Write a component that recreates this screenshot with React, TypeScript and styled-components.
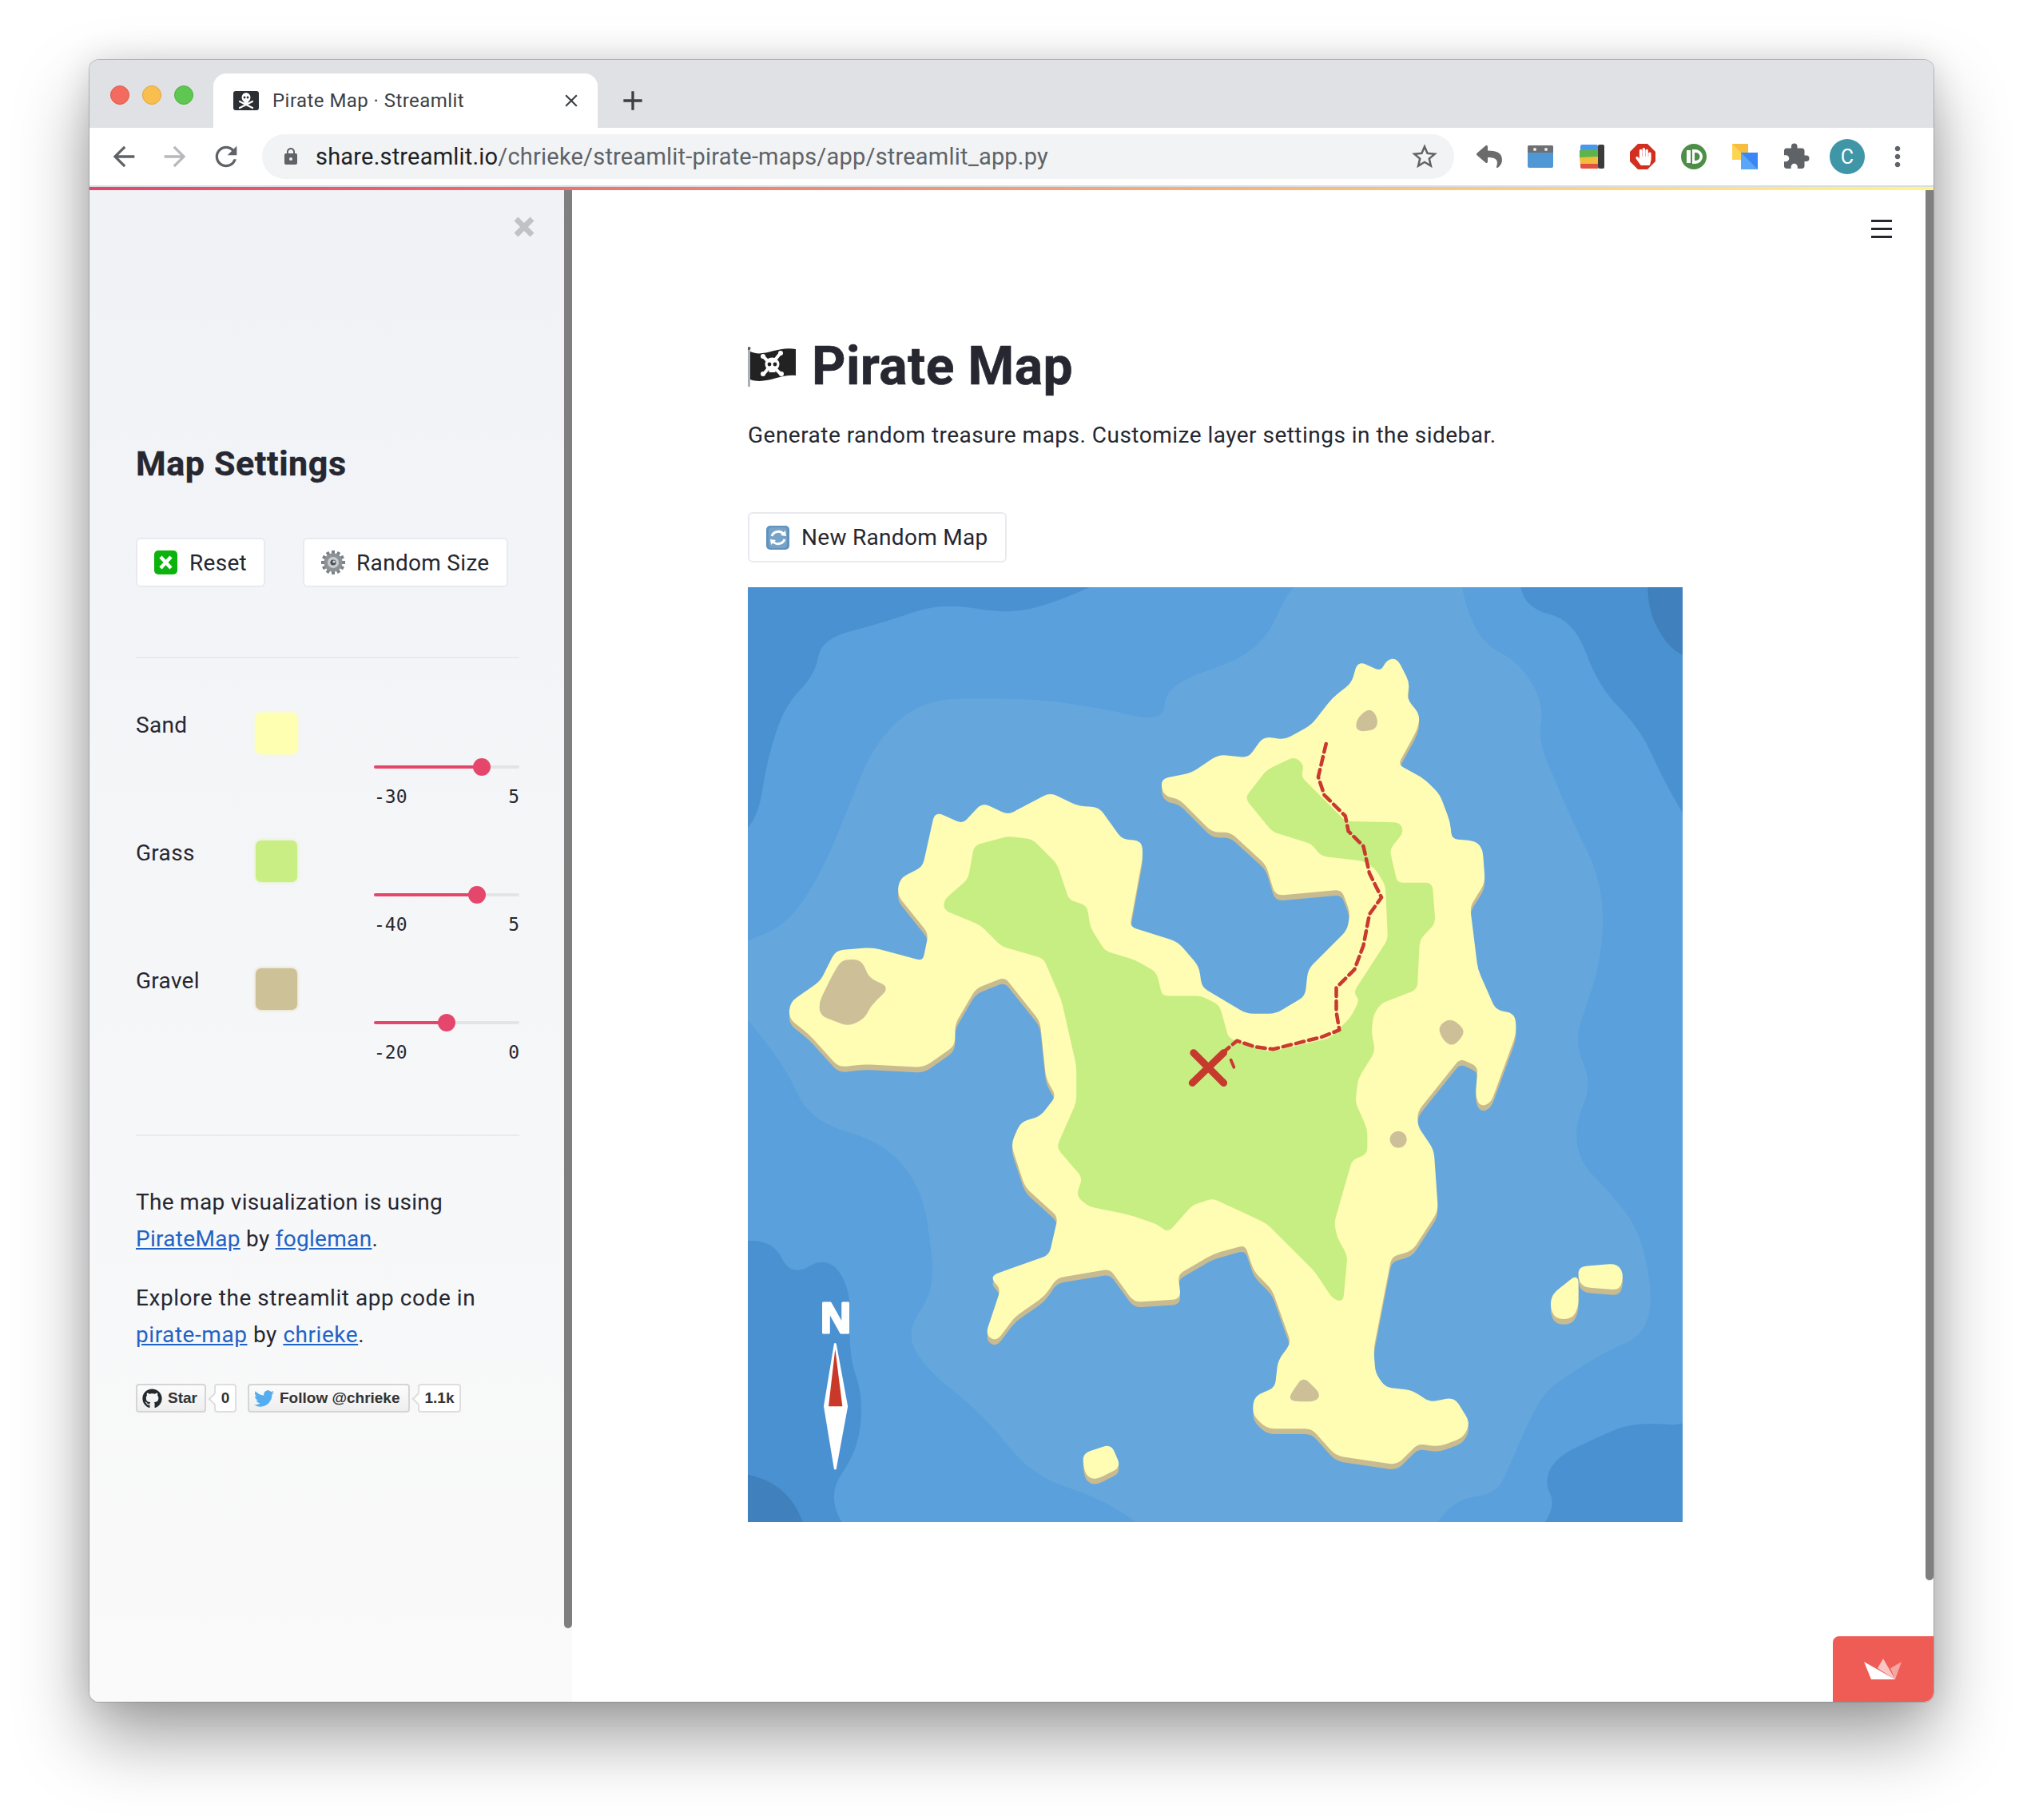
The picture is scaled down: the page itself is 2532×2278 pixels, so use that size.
import styled, { createGlobalStyle } from "styled-components";
import { FaGithub, FaHandPaper, FaReply, FaTwitter } from "react-icons/fa";
import {
  MdAdd,
  MdArrowBack,
  MdArrowForward,
  MdClose,
  MdExtension,
  MdLock,
  MdMoreVert,
  MdRefresh,
  MdStarBorder,
} from "react-icons/md";

const SANS = `Roboto, "Liberation Sans", sans-serif`;

const toPoints = (list: number[][]) => list.map((p) => p.join(",")).join(" ");

// closed path with every corner rounded off by up to r units
const roundedPath = (list: number[][], r: number) => {
  const n = list.length;
  const parts = list.map((cur, i) => {
    const prev = list[(i + n - 1) % n];
    const next = list[(i + 1) % n];
    const d1 = Math.hypot(prev[0] - cur[0], prev[1] - cur[1]);
    const d2 = Math.hypot(next[0] - cur[0], next[1] - cur[1]);
    const t1 = Math.min(r, d1 / 2) / d1;
    const t2 = Math.min(r, d2 / 2) / d2;
    const ax = cur[0] + (prev[0] - cur[0]) * t1;
    const ay = cur[1] + (prev[1] - cur[1]) * t1;
    const bx = cur[0] + (next[0] - cur[0]) * t2;
    const by = cur[1] + (next[1] - cur[1]) * t2;
    return `${i === 0 ? "M" : "L"}${ax} ${ay} Q${cur[0]} ${cur[1]} ${bx} ${by}`;
  });
  return `${parts.join(" ")} Z`;
};

// map shapes, traced in a 1552 unit box
const WATER_MID = [
  [-20, 430], [25, 390], [40, 290], [70, 200], [120, 150], [130, 90], [230, 65], [330, 30], [440, 50], [520, 30], [630, -20],
  [1285, -20], [1300, 40], [1380, 60], [1420, 170], [1490, 240], [1530, 330], [1590, 430], [1590, 1400], [1480, 1390],
  [1410, 1420], [1350, 1450], [1330, 1490], [1350, 1530], [1310, 1590], [180, 1590], [140, 1510], [190, 1440],
  [200, 1350], [175, 1280], [180, 1170], [140, 1115], [80, 1150], [50, 1090], [-20, 1090],
];
const WATER_LIGHT = [
  [920, -20], [1190, -20], [1200, 40], [1230, 100], [1290, 130], [1330, 200], [1320, 260], [1350, 330], [1380, 400],
  [1420, 480], [1430, 560], [1420, 640], [1400, 700], [1380, 760], [1410, 830], [1380, 900], [1390, 960], [1430, 1000],
  [1480, 1060], [1500, 1120], [1510, 1200], [1490, 1250], [1440, 1270], [1390, 1300], [1330, 1340], [1300, 1400],
  [1270, 1470], [1250, 1510], [1180, 1520], [1130, 1590], [700, 1590], [600, 1520], [480, 1480], [400, 1380],
  [300, 1300], [270, 1240], [320, 1170], [300, 1010], [240, 930], [110, 890], [70, 800], [-20, 690], [-20, 600], [70, 570],
  [130, 480], [220, 260], [300, 190], [480, 190], [590, 205], [700, 230], [700, 170], [860, 110],
];
const DEEP_CORNERS = [
  [[1500, -20], [1505, 50], [1540, 110], [1590, 130], [1590, -20]],
  [[-20, 1470], [50, 1490], [90, 1530], [110, 1590], [-20, 1590]],
];
const SAND = [
  [1022, 130], [1060, 147], [1070, 127], [1085, 125], [1105, 165], [1100, 190], [1122, 218], [1118, 240], [1085, 300],
  [1130, 325], [1155, 350], [1172, 395], [1175, 425], [1215, 428], [1226, 440], [1230, 495], [1205, 535], [1218, 640],
  [1248, 708], [1280, 715], [1282, 745], [1240, 860], [1225, 865], [1218, 850], [1222, 800], [1190, 785], [1118, 875],
  [1118, 900], [1145, 940], [1152, 1040], [1110, 1105], [1075, 1115], [1045, 1270], [1048, 1310], [1065, 1335],
  [1110, 1340], [1140, 1360], [1180, 1352], [1205, 1392], [1195, 1415], [1155, 1430], [1120, 1425], [1085, 1460],
  [985, 1445], [945, 1400], [870, 1400], [848, 1378], [850, 1350], [885, 1335], [890, 1290], [912, 1260], [880, 1170],
  [850, 1140], [835, 1095], [780, 1110], [720, 1145], [725, 1185], [650, 1190], [610, 1135], [520, 1150], [500, 1180],
  [450, 1215], [420, 1255], [405, 1245], [430, 1170], [412, 1150], [510, 1115], [525, 1050], [470, 1000], [447, 930],
  [462, 895], [495, 885], [522, 850], [505, 820], [495, 725], [435, 650], [385, 670], [350, 730], [350, 765], [300, 800],
  [200, 795], [160, 800], [110, 745], [78, 720], [80, 695], [130, 660], [155, 610], [215, 605], [300, 628], [310, 580],
  [258, 515], [262, 490], [300, 470], [320, 380], [365, 400], [398, 365], [440, 385], [510, 348], [555, 370], [590, 372],
  [628, 425], [660, 428], [662, 450], [640, 570], [720, 595], [755, 635], [760, 670], [835, 715], [885, 715], [935, 685],
  [940, 640], [1005, 575], [1010, 545], [995, 505], [885, 515], [870, 465], [810, 410], [780, 410], [725, 355], [700, 350],
  [695, 325], [745, 315], [790, 285], [840, 290], [865, 255], [900, 260], [945, 235], [980, 190], [1012, 165],
];
const ISLETS = [
  [[565, 1445], [610, 1430], [625, 1465], [585, 1485], [570, 1478]],
  [[1390, 1135], [1450, 1130], [1460, 1145], [1455, 1170], [1395, 1165], [1388, 1150]],
  [[1345, 1180], [1385, 1148], [1385, 1200], [1375, 1218], [1350, 1218], [1342, 1200]],
];
const GRASS = [
  [335, 525], [375, 490], [385, 435], [440, 420], [480, 425], [520, 465], [540, 525], [570, 535], [575, 570], [600, 610],
  [650, 625], [685, 645], [695, 685], [760, 685], [790, 700], [805, 755], [875, 778], [975, 755], [1010, 720], [1025, 690],
  [1015, 678], [1072, 590], [1068, 500], [1050, 470], [1030, 458], [960, 450], [945, 430], [880, 410], [835, 355],
  [870, 310], [915, 288], [930, 300], [925, 320], [1000, 395], [1090, 397], [1095, 412], [1072, 440], [1085, 497],
  [1143, 497], [1148, 562], [1122, 590], [1118, 672], [1058, 695], [1045, 715], [1042, 745], [1048, 775], [1020, 820],
  [1015, 860], [1035, 905], [1035, 945], [1010, 955], [980, 1060], [985, 1085], [1002, 1115], [995, 1190], [980, 1185],
  [950, 1140], [870, 1060], [780, 1018], [745, 1030], [705, 1075], [690, 1062], [640, 1045], [575, 1032], [555, 1015],
  [565, 985], [522, 935], [555, 860], [555, 800], [530, 690], [500, 620], [430, 600], [395, 565], [335, 540],
];
const GRAVEL = [
  [[165, 625], [195, 625], [208, 655], [240, 670], [210, 700], [200, 720], [175, 732], [130, 715], [128, 695], [150, 650]],
  [[1020, 225], [1040, 207], [1052, 222], [1050, 240], [1020, 243]],
  [[1155, 735], [1175, 722], [1198, 742], [1180, 765], [1165, 758]],
  [[908, 1350], [930, 1318], [957, 1345], [950, 1355], [915, 1355]],
];
const TRAIL = [
  [968, 265], [955, 320], [965, 350], [1000, 385], [1005, 410], [1030, 435], [1040, 480], [1060, 520], [1040, 548],
  [1030, 600], [1015, 640], [985, 670], [985, 710], [990, 740], [960, 752], [880, 772], [850, 768], [820, 758], [800, 775],
];

const LAYERS = [
  { name: "Sand", color: "#ffffb1", glow: "#ffffb1", value: 74, min: "-30", max: "5" },
  { name: "Grass", color: "#c9ef84", glow: "#d8f3a0", value: 71, min: "-40", max: "5" },
  { name: "Gravel", color: "#cdc297", glow: "#ddd2a8", value: 50, min: "-20", max: "0" },
];

const Global = createGlobalStyle`
  html, body {
    margin: 0;
    background: #fff;
  }
  * {
    box-sizing: border-box;
  }
`;

const Page = styled.div`
  width: 2532px;
  height: 2278px;
  padding: 75px 112px 148px 112px;
  background: #fff;
  font-family: ${SANS};
  color: #262730;
`;

const BrowserWindow = styled.div`
  position: relative;
  width: 2308px;
  height: 2055px;
  display: flex;
  flex-direction: column;
  border-radius: 12px;
  overflow: hidden;
  background: #fff;
  box-shadow: 0 0 0 1px rgba(120, 120, 120, 0.45), 0 44px 90px rgba(0, 0, 0, 0.38), 0 0 40px rgba(0, 0, 0, 0.12);
`;

const TabStrip = styled.div`
  flex: none;
  height: 85px;
  background: #dfe1e5;
  display: flex;
  align-items: flex-end;
`;

const Lights = styled.div`
  width: 155px;
  height: 85px;
  padding: 32px 0 0 26px;
  display: flex;
  gap: 16px;
`;

const Light = styled.span<{ $fill: string; $edge: string }>`
  width: 24px;
  height: 24px;
  border-radius: 50%;
  background: ${(p) => p.$fill};
  border: 1px solid ${(p) => p.$edge};
`;

const Tab = styled.div`
  width: 481px;
  height: 68px;
  background: #fff;
  border-radius: 16px 16px 0 0;
  display: flex;
  align-items: center;
  padding: 0 20px 0 25px;
  font-size: 24px;
  color: #3c4043;
`;

const TabTitle = styled.span`
  flex: 1;
  margin-left: 17px;
  letter-spacing: 0.45px;
`;

const NewTab = styled.span`
  margin: 0 0 0 24px;
  height: 68px;
  display: flex;
  align-items: center;
  color: #3c4043;
  font-size: 40px;
`;

const Toolbar = styled.div`
  flex: none;
  height: 72px;
  display: flex;
  align-items: center;
  background: #fff;
  padding-left: 23px;
  color: #5f6368;
`;

const NavGroup = styled.div`
  width: 193px;
  display: flex;
  gap: 24px;
  font-size: 40px;
`;

const Address = styled.div`
  width: 1492px;
  height: 56px;
  border-radius: 28px;
  background: #f1f3f4;
  display: flex;
  align-items: center;
  padding: 0 18px 0 24px;
`;

const Url = styled.div`
  flex: 1;
  margin-left: 19px;
  font-size: 29px;
  letter-spacing: 0.2px;
  color: #5f6368;
  font-family: ${SANS};
  & > b {
    font-weight: 400;
    color: #202124;
  }
`;

const Extensions = styled.div`
  flex: 1;
  display: flex;
  align-items: center;
  padding-left: 26px;
`;

const ExtSlot = styled.span<{ $w: number }>`
  width: ${(p) => p.$w}px;
  display: flex;
  justify-content: center;
`;

const Avatar = styled.span`
  width: 44px;
  height: 44px;
  margin: 0 21px 0 24px;
  border-radius: 50%;
  background: #3f96a6;
  color: #fff;
  font-size: 25px;
  display: flex;
  align-items: center;
  justify-content: center;
`;

const Decoration = styled.div`
  flex: none;
  height: 6px;
  border-top: 2px solid #dadce0;
  background: linear-gradient(90deg, #e4456a, #fff68a);
`;

const Body = styled.div`
  flex: 1;
  min-height: 0;
  display: flex;
`;

const Sidebar = styled.aside`
  position: relative;
  flex: none;
  width: 604px;
  padding: 0 66px 0 58px;
  background: linear-gradient(180deg, #f0f2f6, #fafafa);
`;

const CloseIcon = styled.svg`
  position: absolute;
  top: 33px;
  right: 47px;
`;

const SideTitle = styled.h2`
  margin: 0;
  padding-top: 314px;
  font-size: 43px;
  line-height: 56px;
  font-weight: 700;
  letter-spacing: 0.6px;
  -webkit-text-stroke: 0.4px #262730;
`;

const ButtonRow = styled.div`
  display: flex;
  gap: 47px;
  margin-top: 65px;
`;

const AppButton = styled.div`
  height: 62px;
  display: inline-flex;
  align-items: center;
  gap: 14px;
  padding: 0 21px;
  background: #fff;
  border: 2px solid #e8eaef;
  border-radius: 6px;
  font-size: 28px;
  letter-spacing: 0.3px;
`;

const Rule = styled.hr`
  margin: 0;
  border: 0;
  height: 2px;
  background: #e9eaed;
`;

const TopRule = styled(Rule)`
  margin-top: 87px;
`;

const Layers = styled.div`
  margin-top: 68px;
  display: flex;
  flex-direction: column;
`;

const LayerRow = styled.div`
  height: 160px;
  display: grid;
  grid-template-columns: 150px 52px 96px 182px;
  align-items: start;
`;

const LayerName = styled.span`
  font-size: 28px;
  line-height: 38px;
  letter-spacing: 0.3px;
  margin-top: -3px;
`;

const Swatch = styled.span<{ $fill: string; $glow: string }>`
  width: 52px;
  height: 52px;
  border-radius: 7px;
  background: ${(p) => p.$fill};
  box-shadow: 0 0 4px ${(p) => p.$glow};
`;

const SliderCell = styled.div`
  grid-column: 4;
  padding-top: 57px;
`;

const Track = styled.div`
  position: relative;
  height: 22px;
  display: flex;
  align-items: center;
  &::before {
    content: "";
    flex: 1;
    height: 4px;
    border-radius: 2px;
    background: #e4e4e4;
  }
`;

const Fill = styled.span`
  position: absolute;
  left: 0;
  top: 9px;
  height: 4px;
  border-radius: 2px;
  background: #e4476b;
`;

const Thumb = styled.span`
  position: absolute;
  top: 0;
  width: 22px;
  height: 22px;
  margin-left: -11px;
  border-radius: 50%;
  background: #e4476b;
`;

const Ticks = styled.div`
  display: flex;
  justify-content: space-between;
  margin-top: 12px;
  font-family: "DejaVu Sans Mono", "Liberation Mono", monospace;
  font-size: 23px;
  line-height: 28px;
`;

const BottomRule = styled(Rule)`
  margin-top: 48px;
`;

const Note = styled.p<{ $tracking: number }>`
  margin: 60px 0 0;
  font-size: 28px;
  line-height: 46px;
  letter-spacing: ${(p) => p.$tracking}px;
  & + & {
    margin-top: 28px;
  }
`;

const DocLink = styled.a`
  color: #1f63c6;
  text-decoration: underline;
`;

const Badges = styled.div`
  display: flex;
  margin-top: 38px;
  font-family: "Liberation Sans", Arial, sans-serif;
  font-weight: 700;
  font-size: 19px;
  white-space: nowrap;
`;

const BadgeButton = styled.span<{ $w: number }>`
  width: ${(p) => p.$w}px;
  height: 36px;
  display: flex;
  align-items: center;
  gap: 7px;
  padding-left: 6px;
  border: 2px solid #d5d5d5;
  border-radius: 4px;
  background: linear-gradient(180deg, #fcfcfc, #eeeeee);
  color: #333;
`;

const BadgeCount = styled.span<{ $w: number }>`
  position: relative;
  width: ${(p) => p.$w}px;
  height: 36px;
  margin: 0 14px 0 10px;
  display: flex;
  align-items: center;
  justify-content: center;
  background: #fff;
  border: 2px solid #dedede;
  border-radius: 4px;
  color: #333;
  &::before {
    content: "";
    position: absolute;
    left: -7px;
    top: 11px;
    width: 10px;
    height: 10px;
    background: #fff;
    border-left: 2px solid #dedede;
    border-bottom: 2px solid #dedede;
    transform: rotate(45deg);
  }
`;

const Main = styled.main`
  position: relative;
  flex: 1;
  padding: 0 0 0 220px;
  background: #fff;
`;

const MenuIcon = styled.svg`
  position: absolute;
  top: 37px;
  right: 52px;
`;

const TitleRow = styled.div`
  display: flex;
  align-items: center;
  gap: 18px;
  padding-top: 179px;
`;

const PageTitle = styled.h1`
  margin: 0;
  font-size: 66px;
  line-height: 84px;
  font-weight: 700;
  letter-spacing: 0.4px;
  -webkit-text-stroke: 0.6px #262730;
`;

const Lead = styled.p`
  margin: 24px 0 0;
  font-size: 28px;
  line-height: 40px;
  letter-spacing: 0.48px;
`;

const MainButton = styled(AppButton)`
  margin-top: 76px;
  height: 63px;
  padding: 0 21px;
`;

const MapFrame = styled.div`
  margin-top: 31px;
  width: 1170px;
  height: 1170px;
  line-height: 0;
`;

const BoatBadge = styled.div`
  position: absolute;
  right: 0;
  bottom: 0;
  width: 126px;
  height: 82px;
  border-radius: 8px 0 0 0;
  background: #ef5b55;
  display: flex;
  align-items: center;
  justify-content: center;
`;

const Scrollbar = styled.span<{ $right: number; $height: number }>`
  position: absolute;
  top: 163px;
  right: ${(p) => p.$right}px;
  width: 10px;
  height: ${(p) => p.$height}px;
  background: #7f7f7f;
  border-radius: 0 0 5px 5px;
`;

const HandIcon = styled.span`
  position: absolute;
  left: 6px;
  top: 5px;
  font-size: 22px;
  line-height: 0;
  color: #fff;
`;

const StopSign = styled.span`
  position: relative;
  display: flex;
`;

const SkullTile = () => (
  <svg width="32" height="24" viewBox="0 0 32 24">
    <rect width="32" height="24" rx="3" fill="#2c2f33" />
    <path d="M8 13 L24 21 M24 13 L8 21" stroke="#fff" strokeWidth="2.2" strokeLinecap="round" />
    <ellipse cx="16" cy="8" rx="5.5" ry="6" fill="#fff" />
    <rect x="13.5" y="11" width="5" height="5" fill="#fff" />
    <circle cx="14" cy="8" r="1.4" fill="#2c2f33" />
    <circle cx="18" cy="8" r="1.4" fill="#2c2f33" />
  </svg>
);

const CrossBox = () => (
  <svg width="30" height="30" viewBox="0 0 30 30">
    <rect width="29" height="30" rx="5" fill="#0cb30c" />
    <path d="M8 8 L21 22 M21 8 L8 22" stroke="#fff" strokeWidth="4.4" />
  </svg>
);

const Gear = () => {
  const teeth = Array.from({ length: 12 }, (_, i) => i * 30);
  return (
    <svg width="30" height="30" viewBox="0 0 30 30">
      {teeth.map((deg) => (
        <rect key={deg} x="13" y="0" width="4" height="6" fill="#7d8287" transform={`rotate(${deg} 15 15)`} />
      ))}
      <circle cx="15" cy="15" r="11.5" fill="#8d9297" />
      <circle cx="15" cy="15" r="7" fill="#c9ccd0" />
      <circle cx="15" cy="15" r="3.6" fill="#4e5256" />
      <circle cx="16" cy="14" r="1.6" fill="#e6e6e6" />
    </svg>
  );
};

const RefreshBox = () => (
  <svg width="30" height="30" viewBox="0 0 30 30">
    <rect width="29" height="30" rx="5" fill="#5f92bd" />
    <rect x="3" y="2" width="23" height="26" rx="4" fill="#8db4d2" opacity="0.5" />
    <path d="M7 13 A8.5 8.5 0 0 1 22 11" stroke="#fff" strokeWidth="3" fill="none" />
    <path d="M23 17 A8.5 8.5 0 0 1 8 19" stroke="#fff" strokeWidth="3" fill="none" />
    <path d="M18 12 L25 13 L24 6 Z M12 18 L5 17 L6 24 Z" fill="#fff" />
  </svg>
);

const PirateFlag = () => (
  <svg width="62" height="50" viewBox="0 0 62 50">
    <rect x="0" y="2" width="3" height="48" fill="#a9b0b8" />
    <circle cx="1.5" cy="2" r="2" fill="#55606b" />
    <path d="M3 6 C20 14 36 -1 60 3 L60 36 C40 34 22 48 3 41 Z" fill="#222" />
    <path d="M20 13 L41 34 M40 9 L20 34" stroke="#fff" strokeWidth="4" strokeLinecap="round" />
    <circle cx="19" cy="12" r="3" fill="#fff" />
    <circle cx="41" cy="8" r="3" fill="#fff" />
    <circle cx="19" cy="34" r="3" fill="#fff" />
    <circle cx="42" cy="34" r="3" fill="#fff" />
    <ellipse cx="30.5" cy="22" rx="9" ry="8.4" fill="#fff" />
    <rect x="26.5" y="27" width="8" height="5" fill="#fff" />
    <circle cx="27" cy="22" r="2.4" fill="#222" />
    <circle cx="34" cy="22" r="2.4" fill="#222" />
  </svg>
);

const CalendarExt = () => (
  <svg width="32" height="28" viewBox="0 0 32 28">
    <rect width="32" height="28" rx="2" fill="#5097d6" />
    <path d="M0 2 a2 2 0 0 1 2-2 h28 a2 2 0 0 1 2 2 v7 H0 Z" fill="#6d6f72" />
    <circle cx="9" cy="5" r="2" fill="#eee" />
    <circle cx="23" cy="5" r="2" fill="#eee" />
  </svg>
);

const WalletExt = () => (
  <svg width="32" height="30" viewBox="0 0 32 30">
    <rect x="24" width="8" height="30" rx="2" fill="#3b3b3b" />
    <rect x="2" width="22" height="9" rx="2" fill="#4a98ee" />
    <path d="M1 7 L24 6 V16 L1 17 Z" fill="#5cb44b" />
    <path d="M1 16 L24 15 V25 L2 26 Z" fill="#f2bd3e" />
    <path d="M2 24 L24 24 V30 H4 a2 2 0 0 1-2-2 Z" fill="#e15040" />
  </svg>
);

const StopExt = () => (
  <StopSign>
    <svg width="32" height="32" viewBox="0 0 32 32">
      <path d="M10 0 H22 L32 10 V22 L22 32 H10 L0 22 V10 Z" fill="#d22f20" />
    </svg>
    <HandIcon>
      <FaHandPaper />
    </HandIcon>
  </StopSign>
);

const IdExt = () => (
  <svg width="32" height="32" viewBox="0 0 32 32">
    <circle cx="16" cy="16" r="16" fill="#4d8f48" />
    <rect x="7" y="8" width="5" height="16" fill="#fff" />
    <path d="M14 7 h4 a9 9 0 0 1 0 18 h-4 Z" fill="#fff" />
    <path d="M17 11 h1.5 a5 5 0 0 1 0 10 h-1.5 Z" fill="#4d8f48" />
  </svg>
);

const TranslateExt = () => (
  <svg width="32" height="32" viewBox="0 0 32 32">
    <rect width="20" height="20" fill="#fcd653" />
    <path d="M0 0 H20 V20 Z" fill="#f6bd41" />
    <rect x="11" y="11" width="21" height="21" fill="#5aa6f7" />
    <path d="M11 11 H32 V32 Z" fill="#3a86f5" />
  </svg>
);

const BoatLogo = () => (
  <svg width="48" height="27" viewBox="0 0 48 27">
    <path d="M0 4 L39 26 H9 Z" fill="#fff" />
    <path d="M17 12 L24 0 L39 26 Z" fill="#fff" opacity="0.65" />
    <path d="M33 12 L47 4 L39 26 Z" fill="#fff" opacity="0.45" />
  </svg>
);

const TreasureMap = () => (
  <svg width="1170" height="1170" viewBox="8 5 1552 1552">
    <rect x="8" y="5" width="1552" height="1552" fill="#4a91d1" />
    {DEEP_CORNERS.map((shape, i) => (
      <path key={i} d={roundedPath(shape, 30)} fill="#3f80bd" />
    ))}
    <path d={roundedPath(WATER_MID, 60)} fill="#59a0dc" />
    <path d={roundedPath(WATER_LIGHT, 60)} fill="#65a7dc" />
    {[...ISLETS, SAND].map((shape, i) => (
      <path
        key={i}
        d={roundedPath(shape, 12)}
        transform="translate(0 9)"
        fill="#c9bb90"
        stroke="#c9bb90"
        strokeWidth="4"
        strokeLinejoin="round"
      />
    ))}
    {[...ISLETS, SAND].map((shape, i) => (
      <path
        key={i}
        d={roundedPath(shape, 12)}
        fill="#fffcb4"
        stroke="#fffcb4"
        strokeWidth="4"
        strokeLinejoin="round"
      />
    ))}
    <path d={roundedPath(GRASS, 10)} fill="#c7ee82" stroke="#c7ee82" strokeWidth="3" strokeLinejoin="round" />
    {GRAVEL.map((shape, i) => (
      <path key={i} d={roundedPath(shape, 12)} fill="#cdc098" stroke="#cdc098" strokeWidth="4" strokeLinejoin="round" />
    ))}
    <circle cx="1088" cy="922" r="14" fill="#cdc098" />
    <polyline
      points={toPoints(TRAIL)}
      fill="none"
      stroke="#c9392f"
      strokeWidth="6"
      strokeDasharray="14 8"
      strokeLinecap="round"
      strokeLinejoin="round"
    />
    <path d="M810 790 L815 802" stroke="#c9392f" strokeWidth="5" strokeLinecap="round" />
    <path d="M748 778 L798 828 M798 778 L746 828" stroke="#c63a2e" strokeWidth="12" strokeLinecap="round" />
    <text
      x="154"
      y="1243"
      textAnchor="middle"
      fontFamily="'Liberation Sans', sans-serif"
      fontWeight="700"
      fontSize="70"
      fill="#fff"
      stroke="#fff"
      strokeWidth="4"
      strokeLinejoin="round"
    >
      N
    </text>
    <path d="M153 1262 L172 1365 L153 1468 L136 1365 Z" fill="#fff" stroke="#fff" strokeWidth="4" strokeLinejoin="round" />
    <path d="M153 1270 L165 1365 L142 1365 Z" fill="#c9392a" />
  </svg>
);

const App = () => (
  <Page>
    <Global />
    <BrowserWindow>
      <TabStrip>
        <Lights>
          <Light $fill="#f26b5e" $edge="#e0574a" />
          <Light $fill="#f8bf4e" $edge="#dfa53a" />
          <Light $fill="#5fc751" $edge="#4fae42" />
        </Lights>
        <Tab>
          <SkullTile />
          <TabTitle>Pirate Map · Streamlit</TabTitle>
          <MdClose size={26} />
        </Tab>
        <NewTab>
          <MdAdd />
        </NewTab>
      </TabStrip>
      <Toolbar>
        <NavGroup>
          <MdArrowBack />
          <MdArrowForward color="#b7b9bc" />
          <MdRefresh />
        </NavGroup>
        <Address>
          <MdLock size={24} />
          <Url>
            <b>share.streamlit.io</b>/chrieke/streamlit-pirate-maps/app/streamlit_app.py
          </Url>
          <MdStarBorder size={38} />
        </Address>
        <Extensions>
          <ExtSlot $w={36}>
            <FaReply size={32} color="#6b6b6b" />
          </ExtSlot>
          <ExtSlot $w={92}>
            <CalendarExt />
          </ExtSlot>
          <ExtSlot $w={36}>
            <WalletExt />
          </ExtSlot>
          <ExtSlot $w={92}>
            <StopExt />
          </ExtSlot>
          <ExtSlot $w={36}>
            <IdExt />
          </ExtSlot>
          <ExtSlot $w={92}>
            <TranslateExt />
          </ExtSlot>
          <ExtSlot $w={36}>
            <MdExtension size={36} />
          </ExtSlot>
          <Avatar>C</Avatar>
          <MdMoreVert size={40} color="#5f6368" />
        </Extensions>
      </Toolbar>
      <Decoration />
      <Body>
        <Sidebar>
          <CloseIcon width="26" height="26" viewBox="0 0 26 26">
            <path d="M3 3 L23 23 M23 3 L3 23" stroke="#c1c2c6" strokeWidth="7" />
          </CloseIcon>
          <SideTitle>Map Settings</SideTitle>
          <ButtonRow>
            <AppButton>
              <CrossBox />
              Reset
            </AppButton>
            <AppButton>
              <Gear />
              Random Size
            </AppButton>
          </ButtonRow>
          <TopRule />
          <Layers>
            {LAYERS.map((layer) => (
              <LayerRow key={layer.name}>
                <LayerName>{layer.name}</LayerName>
                <Swatch $fill={layer.color} $glow={layer.glow} />
                <SliderCell>
                  <Track>
                    <Fill style={{ width: `${layer.value}%` }} />
                    <Thumb style={{ left: `${layer.value}%` }} />
                  </Track>
                  <Ticks>
                    <span>{layer.min}</span>
                    <span>{layer.max}</span>
                  </Ticks>
                </SliderCell>
              </LayerRow>
            ))}
          </Layers>
          <BottomRule />
          <Note $tracking={0.3}>
            The map visualization is using
            <br />
            <DocLink>PirateMap</DocLink> by <DocLink>fogleman</DocLink>.
          </Note>
          <Note $tracking={0.55}>
            Explore the streamlit app code in
            <br />
            <DocLink>pirate-map</DocLink> by <DocLink>chrieke</DocLink>.
          </Note>
          <Badges>
            <BadgeButton $w={88}>
              <FaGithub size={25} color="#24292e" />
              Star
            </BadgeButton>
            <BadgeCount $w={28}>0</BadgeCount>
            <BadgeButton $w={203}>
              <FaTwitter size={25} color="#55acee" />
              Follow @chrieke
            </BadgeButton>
            <BadgeCount $w={54}>1.1k</BadgeCount>
          </Badges>
        </Sidebar>
        <Main>
          <MenuIcon width="26" height="23" viewBox="0 0 26 23">
            <path d="M0 1.5 H26 M0 11.5 H26 M0 21.5 H26" stroke="#262730" strokeWidth="3" />
          </MenuIcon>
          <TitleRow>
            <PirateFlag />
            <PageTitle>Pirate Map</PageTitle>
          </TitleRow>
          <Lead>Generate random treasure maps. Customize layer settings in the sidebar.</Lead>
          <MainButton>
            <RefreshBox />
            New Random Map
          </MainButton>
          <MapFrame>
            <TreasureMap />
          </MapFrame>
          <BoatBadge>
            <BoatLogo />
          </BoatBadge>
        </Main>
      </Body>
      <Scrollbar $right={0} $height={1740} />
      <Scrollbar $right={1704} $height={1800} />
    </BrowserWindow>
  </Page>
);

export default App;
